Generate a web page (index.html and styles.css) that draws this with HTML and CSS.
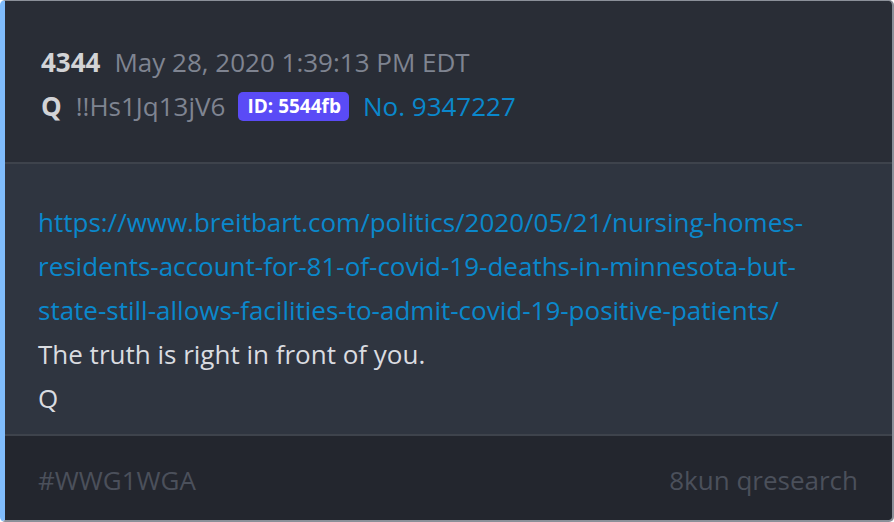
FILE: index.html
```html
<!DOCTYPE html>
<html lang="en">
  <head>
    <title>Post 4344</title>
    <link rel="stylesheet" href="styles.css">
  </head>
<body>
  <div class="post">

    <!-- header with number, date and author -->
    <div class="post-head">
      <div class="line">
        <span class="num">4344</span>
        <span class="date">May 28, 2020 1:39:13 PM EDT</span>
      </div>
      <div class="line">
        <span class="author">Q</span>
        <span class="trip">!!Hs1Jq13jV6</span>
        <span class="badge">ID: 5544fb</span>
        <a class="ref" href="#">No. 9347227</a>
      </div>
    </div>

    <div class="post-body">
      <a class="link" href="#">https://www.breitbart.com/politics/2020/05/21/nursing-homes-residents-account-for-81-of-covid-19-deaths-in-minnesota-but-state-still-allows-facilities-to-admit-covid-19-positive-patients/</a>
      <div>The truth is right in front of you.</div>
      <div>Q</div>
    </div>

    <div class="post-foot">
      <span>#WWG1WGA</span>
      <span>8kun qresearch</span>
    </div>

  </div>
</body>
</html>
```

FILE: styles.css
```css
* {
  box-sizing: border-box;
}
html, body {
  margin: 0;
  height: 100%;
  background: #ffffff;
}
body {
  font: 26px/44px "Open Sans", "DejaVu Sans", sans-serif;
  color: #dadce0;
}
a {
  text-decoration: none;
}
.post {
  height: 522px;
  display: flex;
  flex-direction: column;
  border: 1px solid #8b9099;
  border-left: 5px solid #80bcfc;
  border-right-width: 2px;
  border-bottom-width: 2px;
  border-radius: 5px;
  overflow: hidden;
}
.post-head {
  background-color: #292d36;
  padding: 39px 0 34px 36px;
  border-bottom: 2px solid #3e434c;
}
.line {
  display: flex;
  align-items: center;
  gap: 0 14px;
}
.num, .author {
  font-weight: bold;
  color: #d2d3d6;
}
.date, .trip {
  color: #7f8491;
}
.trip {
  margin-right: -1px;
}
.badge {
  background-color: #5a4bf6;
  color: #fff;
  font-size: 19px;
  font-weight: bold;
  line-height: 29px;
  padding: 0 8px 0 9px;
  border-radius: 5px;
}
.ref, .link {
  color: #0a88cc;
}
.post-body {
  flex: 1;
  background-color: #2f3540;
  padding: 36px 28px 0 33px;
  border-bottom: 2px solid #3e434c;
}
.link {
  display: block;
  overflow-wrap: break-word;
}
.post-foot {
  height: 84px;
  background-color: #23262e;
  padding: 3px 34px 0 33px;
  display: flex;
  justify-content: space-between;
  align-items: center;
  color: #4b505b;
}
```
